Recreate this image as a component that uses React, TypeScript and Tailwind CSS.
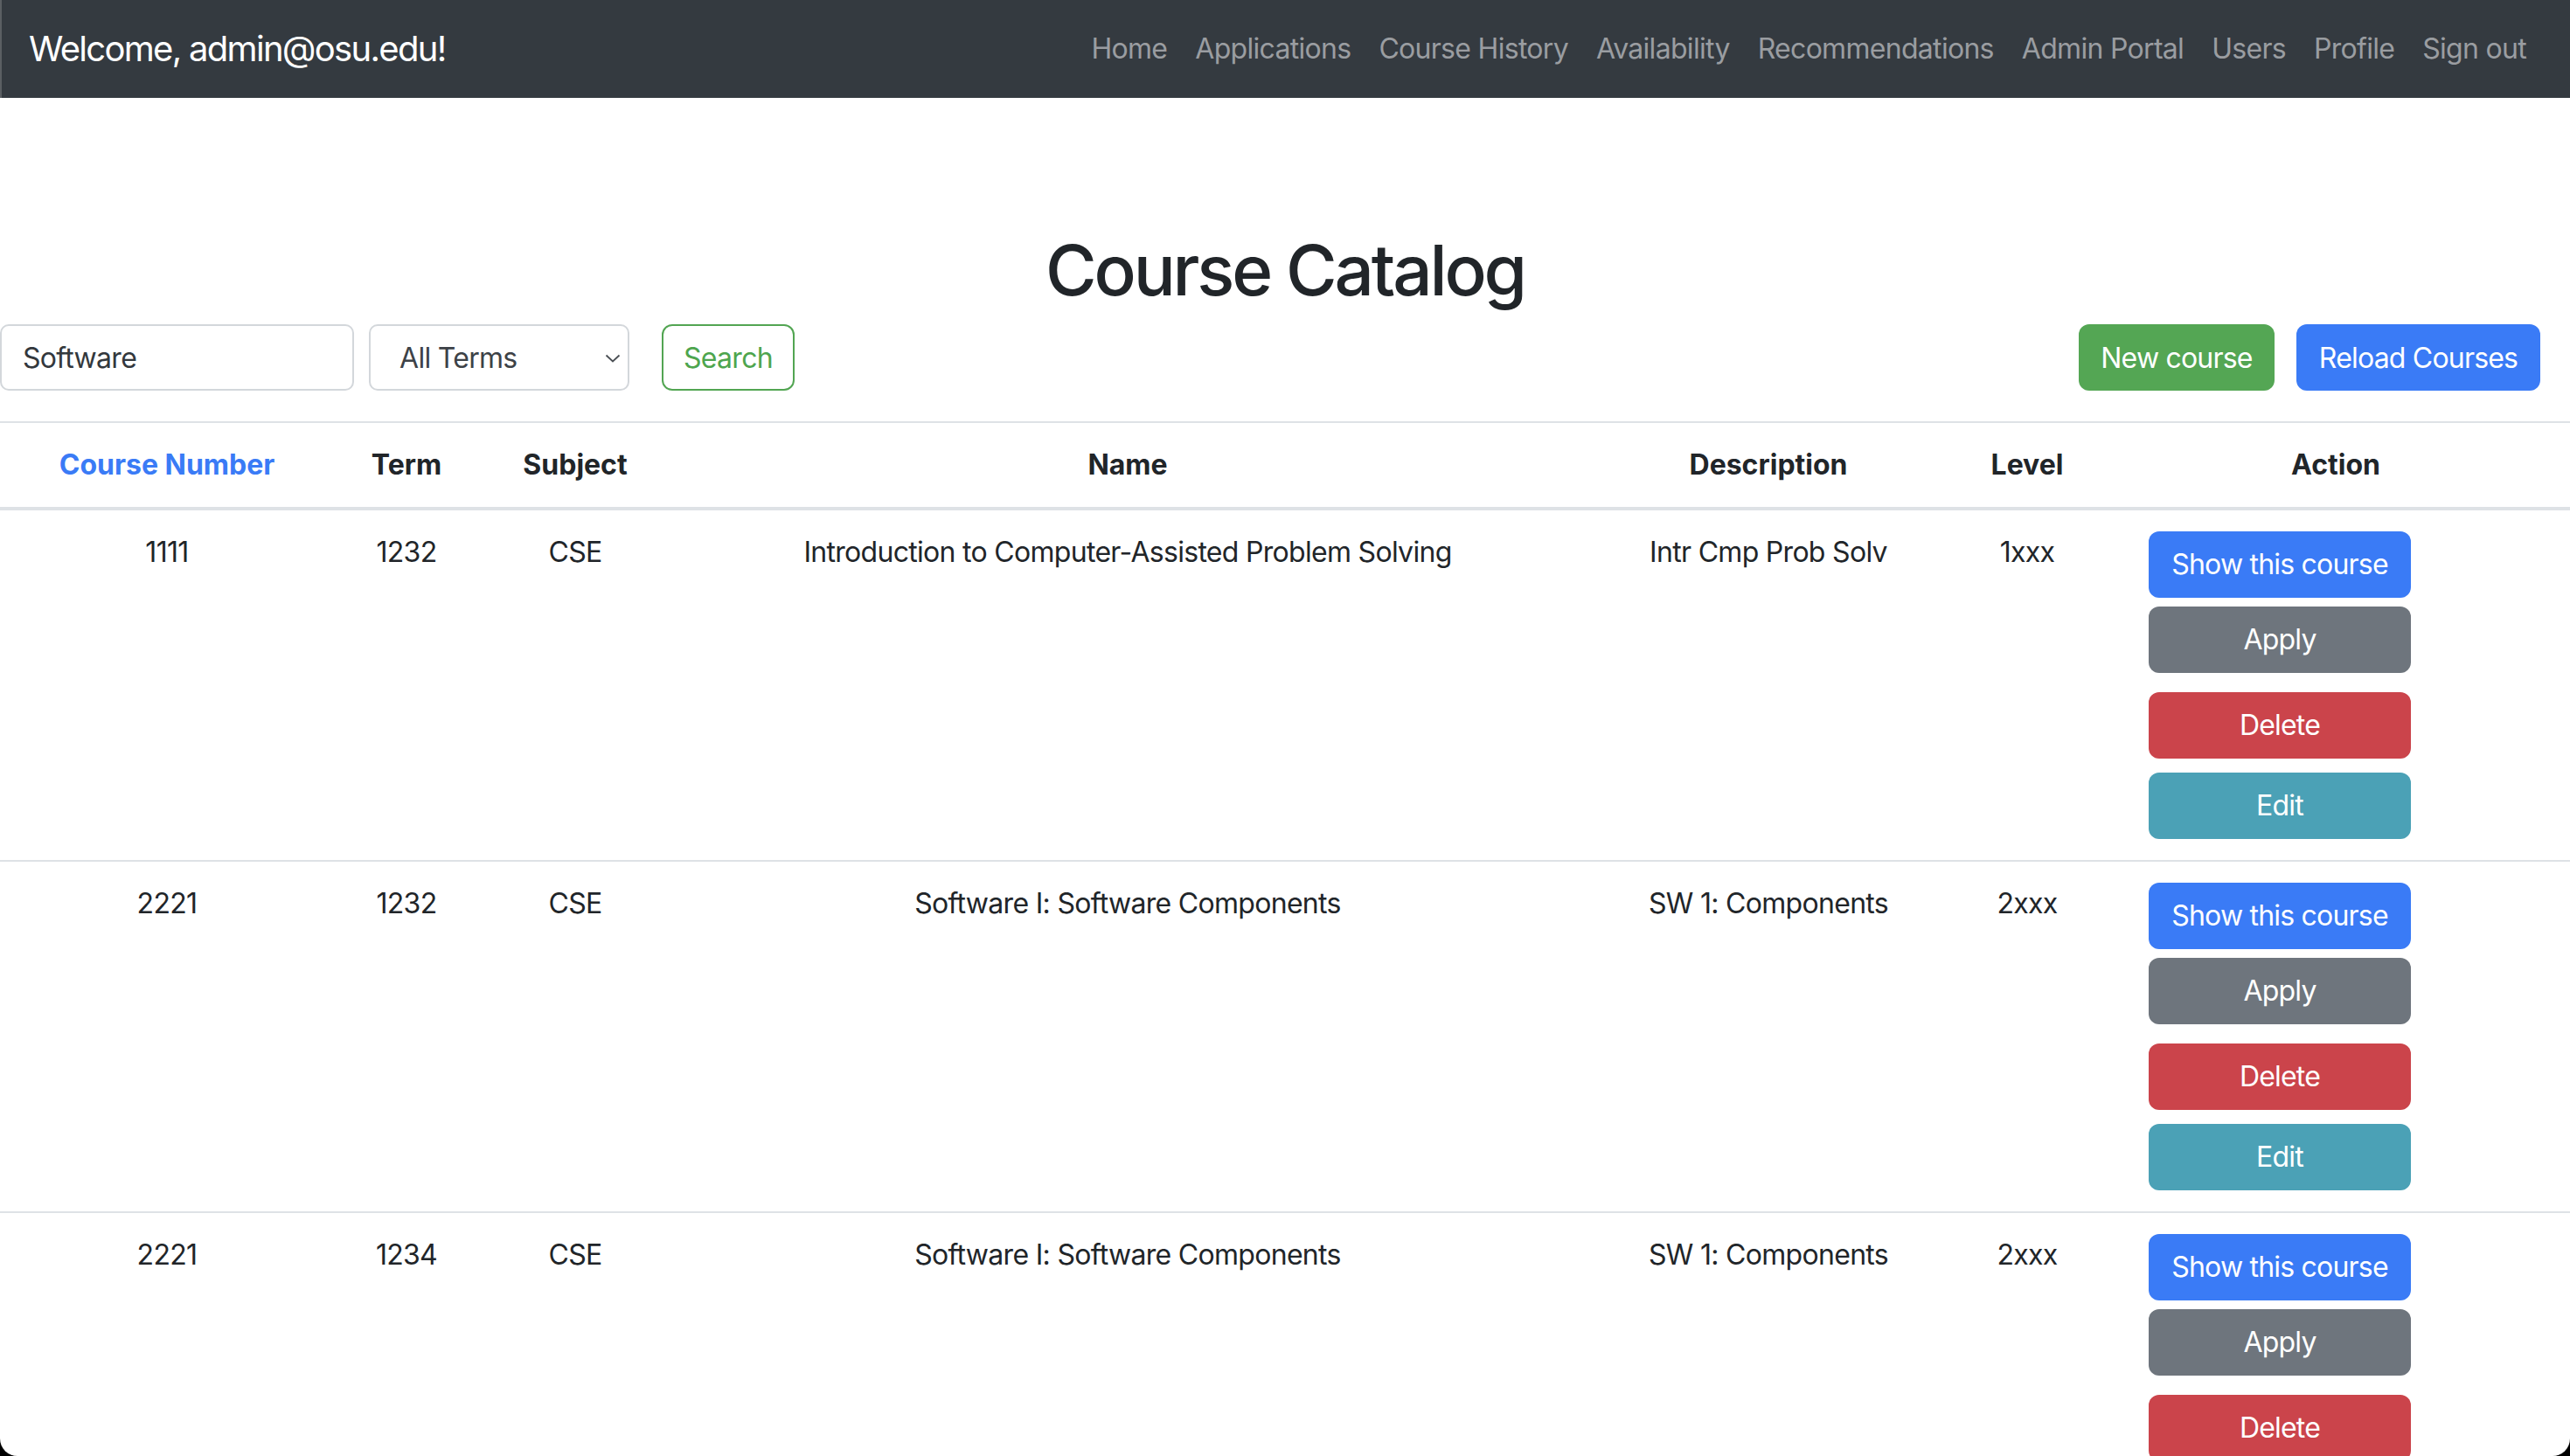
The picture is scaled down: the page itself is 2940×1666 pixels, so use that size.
import React from "react";

const navLinks = [
  "Home",
  "Applications",
  "Course History",
  "Availability",
  "Recommendations",
  "Admin Portal",
  "Users",
  "Profile",
  "Sign out",
];

type Row = {
  num: string;
  term: string;
  subject: string;
  name: string;
  desc: string;
  level: string;
};

const rows: Row[] = [
  {
    num: "1111",
    term: "1232",
    subject: "CSE",
    name: "Introduction to Computer-Assisted Problem Solving",
    desc: "Intr Cmp Prob Solv",
    level: "1xxx",
  },
  {
    num: "2221",
    term: "1232",
    subject: "CSE",
    name: "Software I: Software Components",
    desc: "SW 1: Components",
    level: "2xxx",
  },
  {
    num: "2221",
    term: "1234",
    subject: "CSE",
    name: "Software I: Software Components",
    desc: "SW 1: Components",
    level: "2xxx",
  },
];

function ActionButtons() {
  return (
    <div className="flex flex-col tracking-[-0.8px]">
      <button className="w-[300px] h-[76px] rounded-[12px] bg-[#3a7bf6] text-white text-[32px] leading-[48px] mb-[10px]">
        Show this course
      </button>
      <button className="w-[300px] h-[76px] rounded-[12px] bg-[#6e757d] text-white text-[32px] leading-[48px] mb-[22px]">
        Apply
      </button>
      <button className="w-[300px] h-[76px] rounded-[12px] bg-[#cb444b] text-white text-[32px] leading-[48px] mb-[16px]">
        Delete
      </button>
      <button className="w-[300px] h-[76px] rounded-[12px] bg-[#4ba1b6] text-white text-[32px] leading-[48px]">
        Edit
      </button>
    </div>
  );
}

export default function App() {
  const th =
    "py-[24px] px-0 text-[32px] leading-[48px] font-bold text-center text-[#212529] border-t-2 border-b-4 border-[#dee2e6]";
  const td =
    "align-top py-[24px] px-0 text-[32px] leading-[48px] tracking-[-0.7px] text-center text-[#212529] border-b-2 border-[#dee2e6]";
  return (
    <div className="h-[1666px] bg-black">
      <div className="h-full bg-white rounded-b-[20px] overflow-hidden font-['Inter',sans-serif]">
        <nav className="h-[112px] bg-[#343a40] flex items-center justify-between pl-[31px] pr-[34px] border-l-2 border-[#5b5f63]">
          <span className="text-[40px] leading-[60px] tracking-[-1.7px] text-white">
            Welcome, admin@osu.edu!
          </span>
          <div className="flex items-center">
            {navLinks.map((l) => (
              <span
                key={l}
                className="px-[16px] text-[32px] leading-[48px] tracking-[-0.7px] text-[#9a9da1]"
              >
                {l}
              </span>
            ))}
          </div>
        </nav>

        <h1 className="mt-[149px] text-center text-[80px] leading-[96px] font-medium tracking-[-3.2px] text-[#212529]">
          Course Catalog
        </h1>

        <div className="mt-[14px] flex items-center h-[76px] pr-[34px] tracking-[-0.7px]">
          <div className="w-[405px] h-[76px] border-2 border-[#d3d7db] rounded-[10px] flex items-center pl-[24px] pt-[2px] text-[32px] text-[#33383d]">
            Software
          </div>
          <div className="ml-[17px] w-[298px] h-[76px] border-2 border-[#d3d7db] rounded-[10px] flex items-center justify-between pl-[33px] pr-[8px] pt-[2px] text-[32px] text-[#3d4247]">
            <span>All Terms</span>
            <svg width="18" height="10" viewBox="0 0 18 10" fill="none">
              <path d="M1.5 1.5 L9 8.5 L16.5 1.5" stroke="#4a4f54" strokeWidth="1.8" />
            </svg>
          </div>
          <button className="ml-[37px] w-[152px] h-[76px] border-2 border-[#52a552] rounded-[12px] pt-[2px] text-[32px] text-[#4ea54e]">
            Search
          </button>
          <div className="flex-1" />
          <button className="w-[224px] h-[76px] rounded-[12px] bg-[#54a654] pt-[2px] text-white text-[32px] tracking-[-0.8px]">
            New course
          </button>
          <button className="ml-[25px] w-[279px] h-[76px] rounded-[12px] bg-[#3a7bf6] pt-[2px] text-white text-[32px] tracking-[-0.8px]">
            Reload Courses
          </button>
        </div>

        <table className="mt-[35px] w-full table-fixed border-collapse">
          <colgroup>
            <col className="w-[382px]" />
            <col className="w-[166px]" />
            <col className="w-[220px]" />
            <col className="w-[1044px]" />
            <col className="w-[422px]" />
            <col className="w-[170px]" />
            <col className="w-[536px]" />
          </colgroup>
          <thead>
            <tr>
              <th className={th}>
                <span className="text-[#3a7bf6]">Course Number</span>
              </th>
              <th className={th}>Term</th>
              <th className={th}>Subject</th>
              <th className={th}>Name</th>
              <th className={th}>Description</th>
              <th className={th}>Level</th>
              <th className={th}>Action</th>
            </tr>
          </thead>
          <tbody>
            {rows.map((r, i) => (
              <tr key={i}>
                <td className={td}>{r.num}</td>
                <td className={td}>{r.term}</td>
                <td className={td}>{r.subject}</td>
                <td className={td}>{r.name}</td>
                <td className={td}>{r.desc}</td>
                <td className={td}>{r.level}</td>
                <td className={td + " !text-left pl-[54px]"}>
                  <ActionButtons />
                </td>
              </tr>
            ))}
          </tbody>
        </table>
      </div>
    </div>
  );
}
